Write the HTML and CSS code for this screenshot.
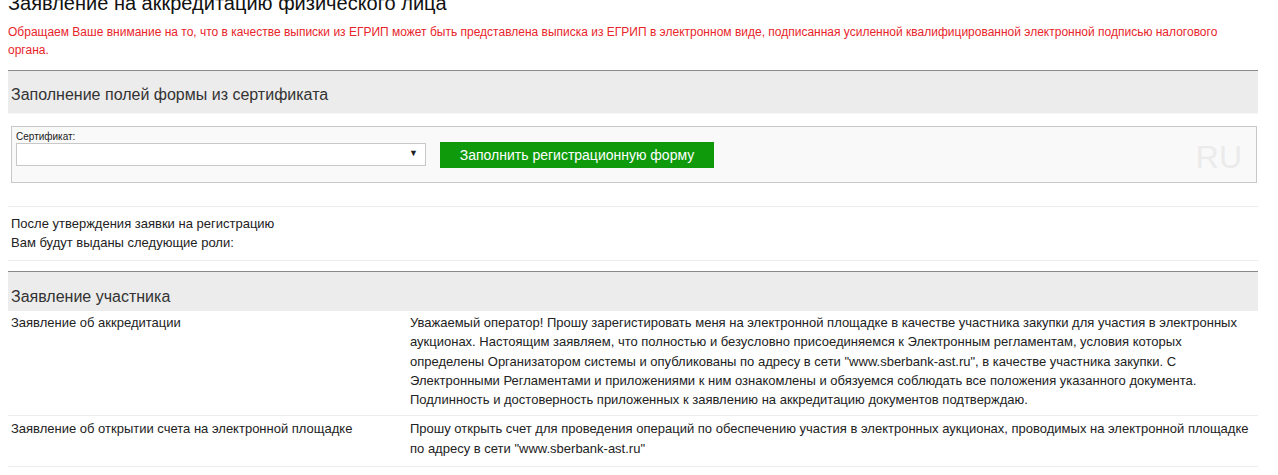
FILE: index.html
```html
<!DOCTYPE html>
<html lang="ru">
<head>
<meta charset="utf-8">
<title>Заявление на аккредитацию физического лица</title>
<link rel="stylesheet" href="styles.css">
</head>
<body>
<div class="page">
  <h1 class="title">Заявление на аккредитацию физического лица</h1>
  <p class="notice">Обращаем Ваше внимание на то, что в качестве выписки из ЕГРИП может быть представлена выписка из ЕГРИП в электронном виде, подписанная усиленной квалифицированной электронной подписью налогового органа.</p>

  <div class="section-head">Заполнение полей формы из сертификата</div>
  <div class="cert-row">
    <div class="cert-box">
      <div class="cert-field">
        <label class="cert-label">Сертификат:</label>
        <div class="select"><span class="arrow">▼</span></div>
      </div>
      <button class="btn-fill">Заполнить регистрационную форму</button>
      <span class="lang">RU</span>
    </div>
  </div>

  <div class="roles">
    <div>После утверждения заявки на регистрацию</div>
    <div>Вам будут выданы следующие роли:</div>
  </div>

  <div class="section-head second">Заявление участника</div>
  <div class="stmt-row">
    <div class="stmt-label">Заявление об аккредитации</div>
    <div class="stmt-text">Уважаемый оператор! Прошу зарегистировать меня на электронной площадке в качестве участника закупки для участия в электронных аукционах. Настоящим заявляем, что полностью и безусловно присоединяемся к Электронным регламентам, условия которых определены Организатором системы и опубликованы по адресу в сети "www.sberbank-ast.ru", в качестве участника закупки. С Электронными Регламентами и приложениями к ним ознакомлены и обязуемся соблюдать все положения указанного документа. Подлинность и достоверность приложенных к заявлению на аккредитацию документов подтверждаю.</div>
  </div>
  <div class="stmt-row">
    <div class="stmt-label">Заявление об открытии счета на электронной площадке</div>
    <div class="stmt-text">Прошу открыть счет для проведения операций по обеспечению участия в электронных аукционах, проводимых на электронной площадке по адресу в сети "www.sberbank-ast.ru"</div>
  </div>
</div>
</body>
</html>
```

FILE: styles.css
```css
html, body {
  margin: 0;
  padding: 0;
  background: #fff;
}
body {
  font-family: "Liberation Sans", Arial, sans-serif;
  color: #222;
  font-size: 13px;
}
.page {
  width: 1250px;
  margin: -9px 0 0 8px;
}
.title {
  margin: 0;
  font-size: 20px;
  font-weight: normal;
  line-height: 24px;
  color: #111;
}
.notice {
  margin: 8px 0 0 0;
  color: #e8252b;
  font-size: 12px;
  line-height: 18px;
  padding-right: 30px;
}
.section-head {
  margin-top: 11px;
  border-top: 1px solid #8a8a8a;
  background: #ececec;
  height: 42px;
  line-height: 47px;
  padding-left: 3px;
  font-size: 16px;
  color: #333;
  border-bottom: 1px solid #f6f6f6;
}
.section-head.second {
  margin-top: 10px;
  height: 39px;
  line-height: 50px;
  border-bottom: none;
}
.cert-row {
  padding: 12px 1px 23px 3px;
  border-bottom: 1px solid #ececec;
}
.cert-box {
  position: relative;
  display: flex;
  align-items: flex-start;
  gap: 14px;
  border: 1px solid #c8c8c8;
  background: #f9f9f9;
  padding: 4px 4px 14px 4px;
}
.cert-field {
  display: flex;
  flex-direction: column;
}
.cert-label {
  font-size: 10px;
  line-height: 12px;
  color: #222;
  margin-bottom: 0;
}
.select {
  width: 408px;
  height: 21px;
  border: 1px solid #c8c8c8;
  background: #fff;
  position: relative;
}
.arrow {
  position: absolute;
  right: 7px;
  top: 4px;
  font-size: 9px;
  color: #222;
}
.btn-fill {
  width: 274px;
  height: 26px;
  margin-top: 11px;
  border: none;
  background: #0e9a0b;
  color: #fff;
  font-family: "Liberation Sans", Arial, sans-serif;
  font-size: 14px;
  padding: 0;
}
.lang {
  position: absolute;
  right: 14px;
  top: 12px;
  font-size: 32px;
  line-height: 37px;
  color: #ebebeb;
}
.roles {
  padding: 7px 3px 8px;
  line-height: 19px;
  font-size: 13px;
  color: #222;
  border-bottom: 1px solid #ececec;
}
.stmt-row {
  display: flex;
  border-bottom: 1px solid #ececec;
  padding: 2px 0 6px;
  line-height: 19.25px;
  font-size: 13px;
  color: #222;
}
.stmt-row + .stmt-row {
  padding-top: 3px;
  padding-bottom: 8px;
}
.stmt-label {
  width: 399px;
  padding-left: 3px;
  flex: none;
}
.stmt-text {
  flex: 1;
  padding-right: 2px;
}
```
